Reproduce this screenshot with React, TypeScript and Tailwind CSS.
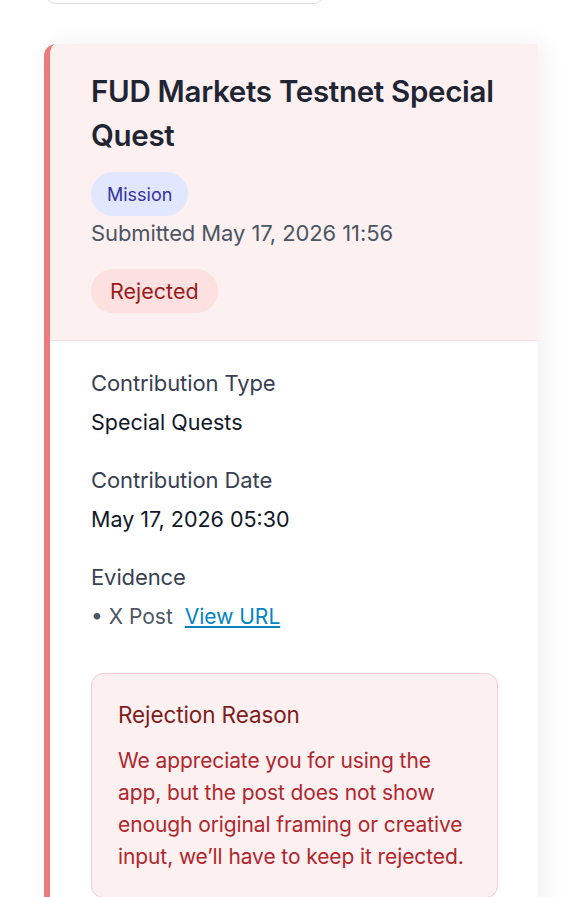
const font = { fontFamily: "Inter, 'Noto Sans', sans-serif" };

function Detail({ label, value }: { label: string; value: React.ReactNode }) {
  return (
    <div className="flex flex-col gap-[11px]">
      <div className="text-[22px] leading-[28px] tracking-[-0.1px] text-[#374151]">{label}</div>
      <div className="text-[21.5px] leading-[28px] text-[#111827]">{value}</div>
    </div>
  );
}

export default function App() {
  return (
    <div className="min-h-screen bg-white pl-[44px] pr-[44px]" style={font}>
      <div className="-mt-[40px] h-[44px] w-[281px] rounded-xl border border-[#d9dce1] bg-white" />

      <div className="mt-[40px] overflow-hidden rounded-tl-xl border-l-[6px] border-[#ec7c7c] bg-white shadow-[6px_0_24px_rgba(0,0,0,0.06)]">
        <div className="border-b border-[#f1e3e3] bg-[#fdf0f0] pl-[41px] pr-[30px] pt-[25px] pb-[27px]">
          <h1 className="text-[29.5px] font-semibold leading-[44px] tracking-[-0.3px] text-[#1f2533]">
            FUD Markets Testnet Special Quest
          </h1>
          <span className="mt-[15px] inline-flex h-[44px] items-center rounded-full bg-[#e0e7ff] px-[16px] text-[18px] text-[#3730a3]">
            Mission
          </span>
          <div className="mt-[2px] text-[22px] leading-[30px] tracking-[-0.1px] text-[#4b5563]">
            Submitted May 17, 2026 11:56
          </div>
          <span className="mt-[21px] inline-flex h-[44px] items-center rounded-full bg-[#fde0e0] px-[19px] text-[21.5px] text-[#991b1b]">
            Rejected
          </span>
        </div>

        <div className="flex flex-col pl-[41px] pr-[40px] pt-[28px] pb-[40px]">
          <div className="flex flex-col gap-[30px]">
            <Detail label="Contribution Type" value="Special Quests" />
            <Detail label="Contribution Date" value="May 17, 2026 05:30" />
            <Detail
              label="Evidence"
              value={
                <span className="text-[21px] text-[#4b5563]">
                  • X Post{" "}
                  <a href="#" className="ml-[6px] text-[#0284c7] underline underline-offset-2">
                    View URL
                  </a>
                </span>
              }
            />
          </div>

          <div className="mt-[42px] rounded-xl border border-[#f6cccc] bg-[#fdf0f0] pl-[26px] pr-[20px] pt-[27px] pb-[24px]">
            <div className="text-[22.5px] leading-[28px] tracking-[-0.1px] text-[#7f1d1d]">Rejection Reason</div>
            <p className="mt-[16px] text-[21px] leading-[32px] tracking-[-0.1px] text-[#b0262c]">
              We appreciate you for using the app, but the post does not show enough original framing or creative input, we’ll have to keep it rejected.
            </p>
          </div>
        </div>
      </div>
    </div>
  );
}
